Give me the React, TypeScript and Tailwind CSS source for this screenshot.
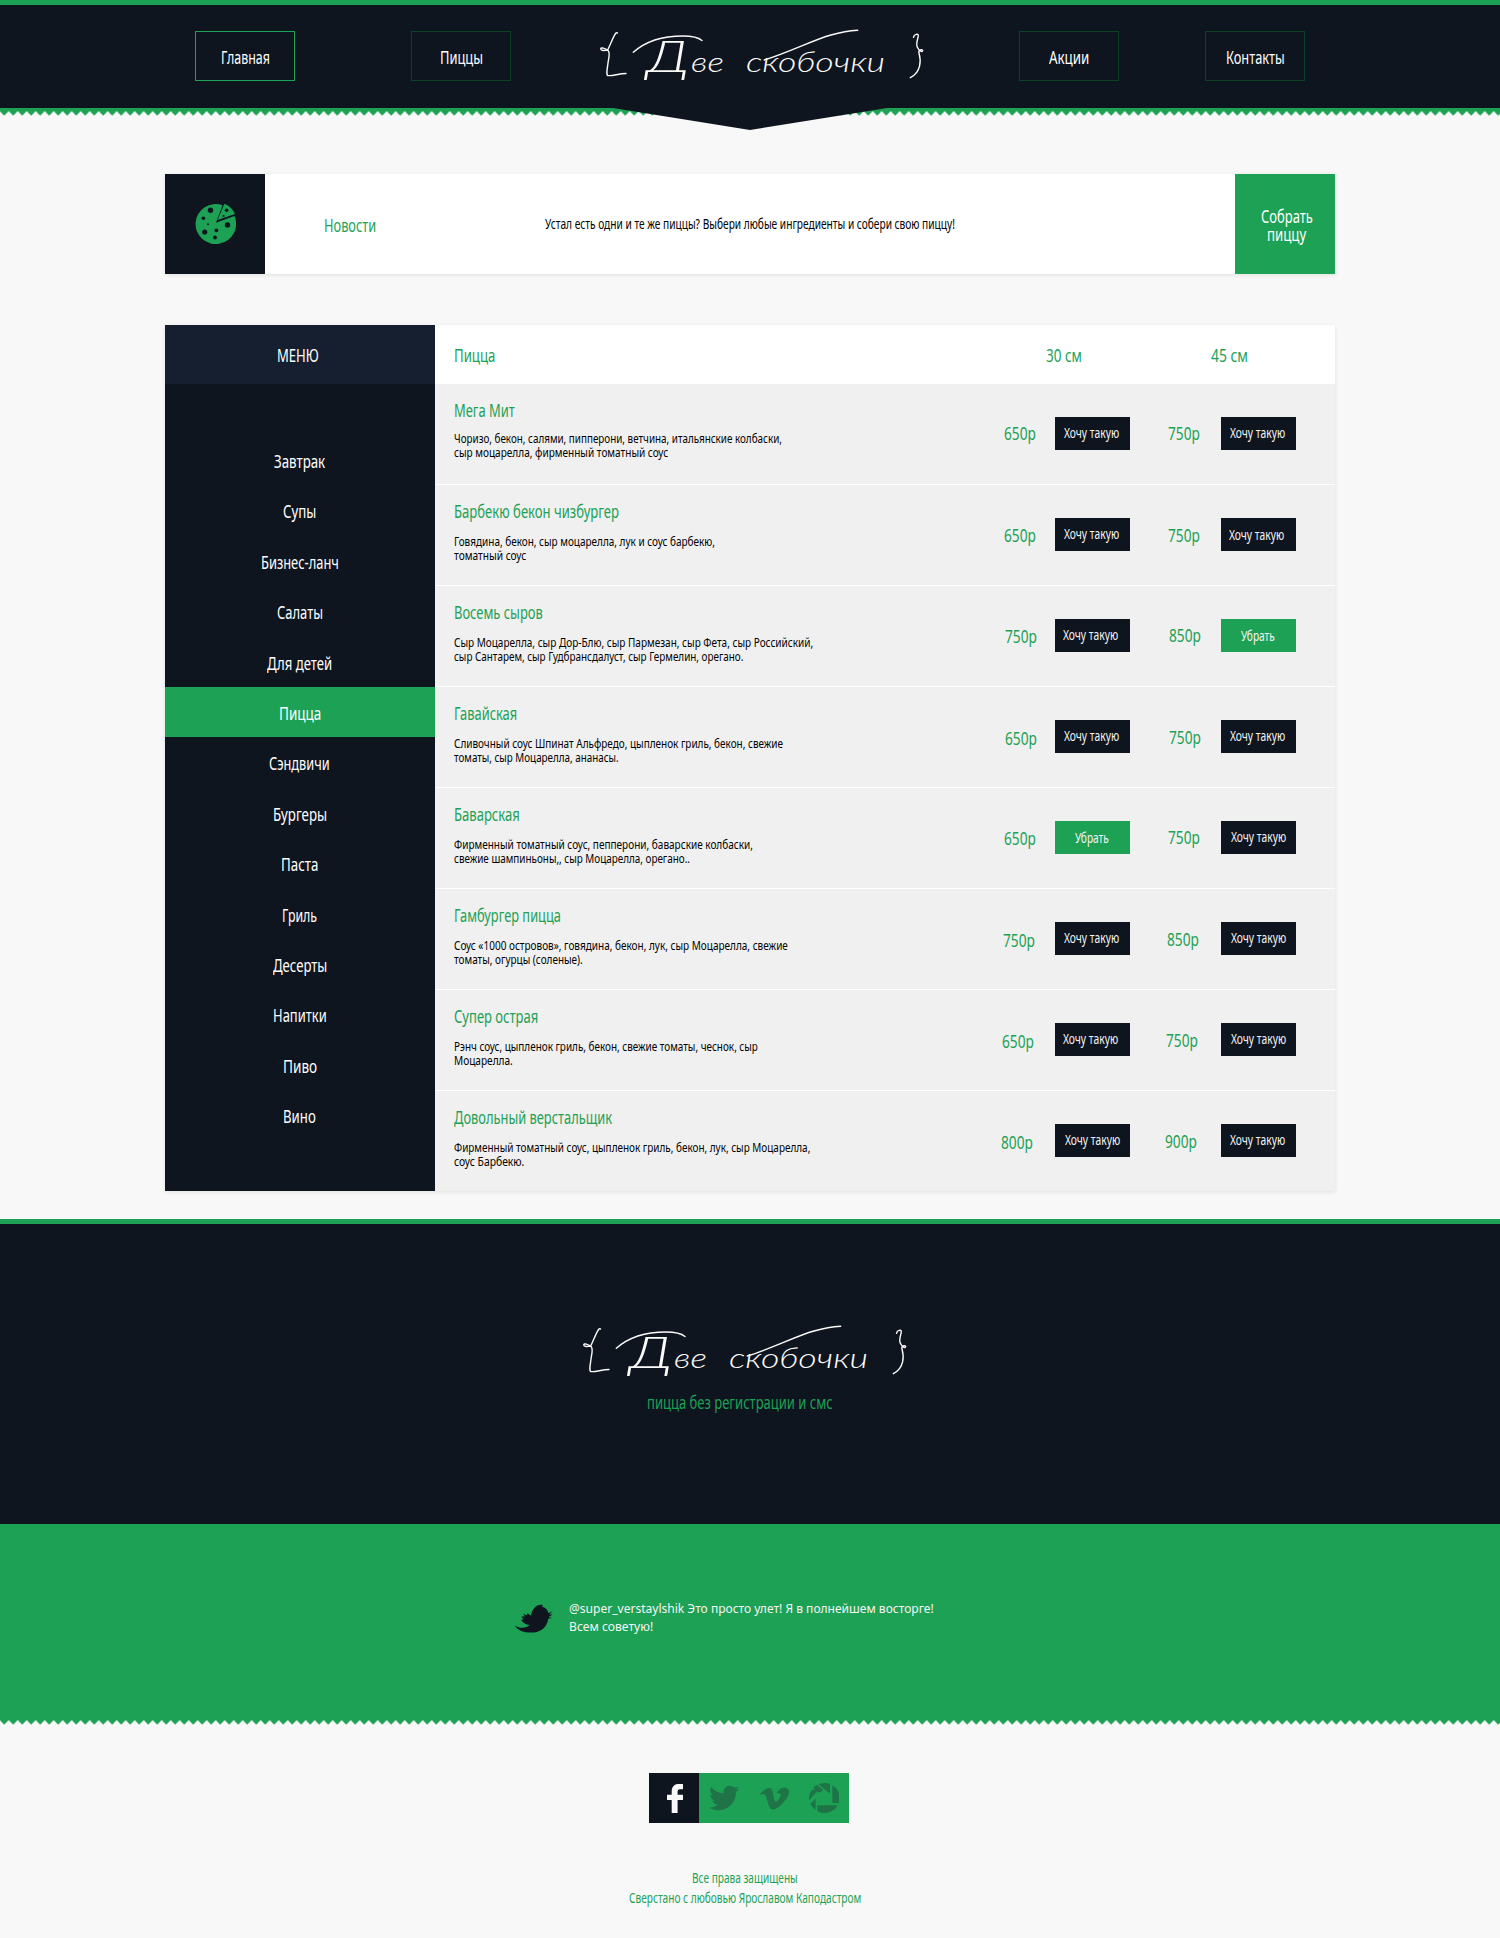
import { useLayoutEffect, useRef, type ReactNode } from "react";
import { FaTwitter, FaVimeoV } from "react-icons/fa";

/* Single line of text, condensed horizontally to an exact width. */
function Narrow({ w, children, className = "" }: { w: number; children: ReactNode; className?: string }) {
  const ref = useRef<HTMLSpanElement>(null);
  useLayoutEffect(() => {
    const el = ref.current;
    if (el) el.style.transform = `scaleX(${w / el.offsetWidth})`;
  }, [w]);
  return (
    <span className={`block whitespace-nowrap ${className}`} style={{ width: w }}>
      <span ref={ref} className="inline-block origin-left align-top">
        {children}
      </span>
    </span>
  );
}

function Logo() {
  return (
    <svg width="336" height="58" viewBox="0 0 336 58" fill="none" stroke="#fbfbf8" strokeWidth="1.4" strokeLinecap="round" strokeLinejoin="round">
      <path d="M22.500 8C20.500 5.500 17 16 12.700 25C10 25.500 6 26 5.700 24C6 22 10 23 13 25.500C15.500 28 13.800 32 13 38C12 45 11 50 13 50.500C17 51.300 24 48.500 31 48.500" />
      <path d="M38.300 27.300C52 15 72 11 88 11C98 11 104 13 107 15.500" />
      <path d="M169.300 35C195 27 218 15 236 10C247 7 255 5.800 262.700 5.300" />
      <path d="M318.500 12.300C319 9 323.500 8.500 323.300 10.500C323 15 320 19 322.800 23C325 27 327.500 27 327.700 25.500C327 23.500 323 25 324 28C326 35 326.500 47 315.300 52.700" />
      <g fill="#fbfbf8" stroke="none" className="font-['Lato','Liberation_Serif',serif] font-light italic">
        <text x="52" y="46.500" fontSize="43" textLength="42" lengthAdjust="spacingAndGlyphs">Д</text>
        <text x="96" y="46.500" fontSize="28" textLength="33" lengthAdjust="spacingAndGlyphs">ве</text>
        <text x="151" y="46.500" fontSize="27" textLength="139" lengthAdjust="spacingAndGlyphs">скобочки</text>
      </g>
    </svg>
  );
}

function PizzaIcon() {
  return (
    <svg width="42" height="42" viewBox="0 0 42 42">
      <path d="M28.500 2.200A20.300 20 0 1 0 40.400 13L22 19.800Z" fill="#1ca155" />
      <path d="M30.400 .8L23.600 17L41 11C39 6.500 35.500 2.800 30.400 .8Z" fill="#1ca155" />
      <g fill="#0f151f">
        <circle cx="16.500" cy="7.200" r="2.700" />
        <circle cx="9.400" cy="15.300" r="1.800" />
        <circle cx="14" cy="21.200" r="1" />
        <circle cx="10.700" cy="29" r="2.600" />
        <circle cx="22.400" cy="27.300" r="1.900" />
        <circle cx="33.500" cy="22" r="2.700" />
        <circle cx="21" cy="34.500" r="1.900" />
        <circle cx="32.600" cy="7.300" r="1.800" />
        <circle cx="29.500" cy="13" r="1.100" />
      </g>
    </svg>
  );
}

function Bird() {
  return (
    <svg width="38" height="30" viewBox="0 0 112 84" fill="#0f151f">
      <path d="M0 62C14 70 32 71 43 60C32 58 24 54 18 45L25 42L18 35L29 34L24 27L36 31L36 25L47 32C50 14 62 0 76 0C79 0 82 1 83 3L77 7C88 6 96 14 98 24L110 20L101 29L111 29L99 36L109 39L98 41C95 66 75 82 47 82C27 82 8 76 0 62Z" />
    </svg>
  );
}

function Aperture() {
  return (
    <svg width="30" height="30" viewBox="0 0 90 90" fill="currentColor">
      <path d="M29 4A45 45 0 0 1 63 3V32Z" />
      <path d="M70 7A45 45 0 0 1 90 60H70Z" />
      <path d="M25 67H86A45 45 0 0 1 25 85Z" />
      <path d="M20 47V81A45 45 0 0 1 4 63Z" />
      <path d="M0 52A45 45 0 0 1 8 21L31 19Z" />
      <path d="M12 15A45 45 0 0 1 24 6L43 21L31 29Z" />
    </svg>
  );
}

function Teeth({ id }: { id: string }) {
  return (
    <svg width="100%" height="5" className="block">
      <defs>
        <pattern id={id} width="9" height="5" patternUnits="userSpaceOnUse" x="-.3">
          <path d="M0 0H9L4.500 4.700Z" fill="#1ca155" />
        </pattern>
      </defs>
      <rect width="100%" height="5" fill={`url(#${id})`} />
    </svg>
  );
}

function NavItem({ label, w, active = false, className = "" }: { label: string; w: number; active?: boolean; className?: string }) {
  return (
    <a className={`flex h-[50px] w-[100px] items-center justify-center border pt-px text-lg leading-5 ${active ? "border-[#1ca155]" : "border-[#0c4126]"} ${className}`}>
      <Narrow w={w}>{label}</Narrow>
    </a>
  );
}

const menu: [string, number][] = [
  ["Завтрак", 51], ["Супы", 33], ["Бизнес-ланч", 78], ["Салаты", 46], ["Для детей", 65], ["Пицца", 42], ["Сэндвичи", 61],
  ["Бургеры", 54], ["Паста", 37], ["Гриль", 35], ["Десерты", 54], ["Напитки", 54], ["Пиво", 34], ["Вино", 33],
];

type Offer = { price: string; dx: number; y: number; tx: number; ty?: number; chosen?: boolean };
type Pizza = { name: string; nw: number; gap: number; lines: [string, number][]; a: Offer; b: Offer };

const pizzas: Pizza[] = [
  {
    name: "Мега Мит", nw: 61, gap: 11,
    lines: [["Чоризо, бекон, салями, пипперони, ветчина, итальянские колбаски,", 328], ["сыр моцарелла, фирменный томатный соус", 214]],
    a: { price: "650р", dx: 3, y: 50, tx: 9 }, b: { price: "750р", dx: 3, y: 50, tx: 9 },
  },
  {
    name: "Барбекю бекон чизбургер", nw: 165, gap: 13,
    lines: [["Говядина, бекон, сыр моцарелла, лук и соус барбекю,", 261], ["томатный соус", 72]],
    a: { price: "650р", dx: 3, y: 51, tx: 9 }, b: { price: "750р", dx: 3, y: 51, tx: 8, ty: 1 },
  },
  {
    name: "Восемь сыров", nw: 89, gap: 13,
    lines: [["Сыр Моцарелла, сыр Дор-Блю, сыр Пармезан, сыр Фета, сыр Российский,", 359], ["сыр Сантарем, сыр Гудбрансдалуст, сыр Гермелин, орегано.", 289]],
    a: { price: "750р", dx: 4, y: 51, tx: 8 }, b: { price: "850р", dx: 4, y: 50, tx: 20, ty: 1, chosen: true },
  },
  {
    name: "Гавайская", nw: 63, gap: 13,
    lines: [["Сливочный соус Шпинат Альфредо, цыпленок гриль, бекон, свежие", 329], ["томаты, сыр Моцарелла, ананасы.", 165]],
    a: { price: "650р", dx: 4, y: 52, tx: 9 }, b: { price: "750р", dx: 4, y: 51, tx: 9 },
  },
  {
    name: "Баварская", nw: 66, gap: 13,
    lines: [["Фирменный томатный соус, пепперони, баварские колбаски,", 299], ["свежие шампиньоны,, сыр Моцарелла, орегано..", 236]],
    a: { price: "650р", dx: 3, y: 51, tx: 20, ty: 1, chosen: true }, b: { price: "750р", dx: 3, y: 50, tx: 10 },
  },
  {
    name: "Гамбургер пицца", nw: 107, gap: 13,
    lines: [["Соус «1000 островов», говядина, бекон, лук, сыр Моцарелла, свежие", 334], ["томаты, огурцы (соленые).", 129]],
    a: { price: "750р", dx: 2, y: 52, tx: 9 }, b: { price: "850р", dx: 2, y: 51, tx: 10 },
  },
  {
    name: "Супер острая", nw: 84, gap: 13,
    lines: [["Рэнч соус, цыпленок гриль, бекон, свежие томаты, чеснок, сыр", 304], ["Моцарелла.", 59]],
    a: { price: "650р", dx: 1, y: 52, tx: 8 }, b: { price: "750р", dx: 1, y: 51, tx: 10 },
  },
  {
    name: "Довольный верстальщик", nw: 158, gap: 13,
    lines: [["Фирменный томатный соус, цыпленок гриль, бекон, лук, сыр Моцарелла,", 356], ["соус Барбекю.", 70]],
    a: { price: "800р", dx: 0, y: 52, tx: 10 }, b: { price: "900р", dx: 0, y: 51, tx: 9 },
  },
];

function OfferCell({ offer, className }: { offer: Offer; className: string }) {
  return (
    <div className={`flex ${className}`}>
      <div className="flex-1 text-lg leading-5 text-[#1ca155]" style={{ paddingLeft: offer.dx, paddingTop: offer.y - 11 }}>
        <Narrow w={32}>{offer.price}</Narrow>
      </div>
      <button
        className={`mt-[33px] h-[33px] w-[75px] text-left text-sm leading-[31px] text-[#f5f5f5] ${offer.chosen ? "bg-[#1ca155]" : "bg-[#0f151f]"}`}
        style={{ paddingLeft: offer.tx, paddingBottom: 2 - 2 * (offer.ty ?? 0) }}
      >
        <Narrow w={offer.chosen ? 34 : 55}>{offer.chosen ? "Убрать" : "Хочу такую"}</Narrow>
      </button>
    </div>
  );
}

export default function App() {
  return (
    <div className="h-[1938px] w-[1500px] overflow-hidden bg-[#f8f8f8] font-['Noto_Sans',sans-serif]">
      <header className="relative h-[116px]">
        <div className="flex h-[108px] border-t-5 border-[#1ca155] bg-[#0f151f] pt-[26px] text-white">
          <NavItem label="Главная" w={49} active className="ml-[195px]" />
          <NavItem label="Пиццы" w={43} className="ml-[116px]" />
          <div className="-mt-[6px] ml-[84px] w-[336px]">
            <Logo />
          </div>
          <NavItem label="Акции" w={40} className="ml-[88px]" />
          <NavItem label="Контакты" w={59} className="ml-[86px]" />
        </div>
        <div className="h-[3px] bg-[#1ca155]" />
        <Teeth id="teeth-top" />
        <svg className="absolute left-[613px] top-[107px]" width="274" height="23" viewBox="0 0 274 23">
          <path d="M0 0V1L137 23L274 1V0Z" fill="#0f151f" />
        </svg>
      </header>

      <section className="mx-auto mt-[58px] flex h-[100px] w-[1170px] bg-white shadow-[0_1px_4px_rgba(0,0,0,0.1)]">
        <div className="flex w-[100px] items-center justify-center bg-[#0f151f]">
          <PizzaIcon />
        </div>
        <div className="w-[280px] pl-[59px] pt-[41px] text-lg leading-5 text-[#1ca155]">
          <Narrow w={52}>Новости</Narrow>
        </div>
        <div className="flex-1 pt-[40px] text-sm leading-5 text-black">
          <Narrow w={410}>Устал есть одни и те же пиццы? Выбери любые ингредиенты и собери свою пиццу!</Narrow>
        </div>
        <div className="flex w-[100px] flex-col items-center bg-[#1ca155] pt-[33px] pl-[3px] text-lg leading-[18px] text-white">
          <Narrow w={52}>Собрать</Narrow>
          <Narrow w={39}>пиццу</Narrow>
        </div>
      </section>

      <section className="mx-auto mt-[51px] flex h-[866px] w-[1170px] bg-[#f0f0f0] shadow-[0_1px_4px_rgba(0,0,0,0.1)]">
        <aside className="w-[270px] bg-[#0f151f] text-lg leading-5 text-white">
          <h2 className="flex h-[59px] items-center justify-center bg-[#161f2f] pt-px pr-1">
            <Narrow w={42}>МЕНЮ</Narrow>
          </h2>
          <nav className="flex flex-col gap-[0.4px] pt-[51px]">
            {menu.map(([label, w]) => (
              <a key={label} className={`flex h-[50px] shrink-0 items-center justify-center pt-[2px] pr-px ${label === "Пицца" ? "bg-[#1ca155]" : ""}`}>
                <Narrow w={w}>{label}</Narrow>
              </a>
            ))}
          </nav>
        </aside>
        <div className="flex-1">
          <div className="flex h-[59px] bg-white pl-[19px] pt-[20px] text-lg leading-5 text-[#1ca155]">
            <Narrow w={41}>Пицца</Narrow>
            <Narrow w={36} className="ml-[551px]">30 см</Narrow>
            <Narrow w={37} className="ml-[129px]">45 см</Narrow>
          </div>
          {pizzas.map((p) => (
            <div key={p.name} className="flex h-[101px] border-b border-white last:h-[100px] last:border-0">
              <div className="w-[566px] pl-[19px] pt-[16px] text-[13px] leading-[14px] text-black">
                <h3 className="text-lg leading-5 text-[#1ca155]" style={{ marginBottom: p.gap }}>
                  <Narrow w={p.nw}>{p.name}</Narrow>
                </h3>
                {p.lines.map(([text, w]) => (
                  <Narrow key={text} w={w}>{text}</Narrow>
                ))}
              </div>
              <OfferCell offer={p.a} className="w-[129px]" />
              <OfferCell offer={p.b} className="ml-[35px] w-[131px]" />
            </div>
          ))}
        </div>
      </section>

      <section className="mt-[28px] h-[305px] border-t-5 border-[#1ca155] bg-[#0f151f] pt-[97px]">
        <div className="ml-[578px] h-[71px]">
          <Logo />
        </div>
        <div className="ml-[647px] text-lg leading-5 text-[#1ca155]">
          <Narrow w={186}>пицца без регистрации и смс</Narrow>
        </div>
      </section>
      <section className="flex h-[196px] bg-[#1ca155] pl-[515px] pt-[76px]">
        <div className="mt-1">
          <Bird />
        </div>
        <div className="ml-4 text-xs leading-[18px] text-[#f5f5f5]">
          <Narrow w={365}>@super_verstaylshik Это просто улет! Я в полнейшем восторге!</Narrow>
          <Narrow w={84}>Всем советую!</Narrow>
        </div>
      </section>
      <Teeth id="teeth-bottom" />

      <footer className="pt-[48px]">
        <div className="ml-[649px] flex h-[50px] w-[200px] bg-[#1ca155] text-[#1f7447]">
          <div className="flex w-[50px] items-center justify-center bg-[#0f151f]">
            <svg width="16" height="29" viewBox="0 0 16 29" className="ml-px">
              <path d="M4.700 29V16H0V10.700H4.700V7.500C4.700 2.500 7.500 0 11.500 0H16V5.300H13C11.300 5.300 10.600 6 10.600 7.800V10.700H16V16H10.600V29Z" fill="#f8f8f8" />
            </svg>
          </div>
          <div className="flex flex-1 pl-[10px]">
            <FaTwitter size={30} className="mt-[10px]" />
            <FaVimeoV size={29} preserveAspectRatio="none" className="ml-[21px] mt-[11px]" />
            <div className="ml-[20px] mt-[10px]">
              <Aperture />
            </div>
          </div>
        </div>
        <div className="mt-[45px] text-sm leading-5 text-[#1ca155]">
          <Narrow w={106} className="ml-[692px]">Все права защищены</Narrow>
          <Narrow w={232} className="ml-[629px]">Сверстано с любовью Ярославом Каподастром</Narrow>
        </div>
      </footer>
    </div>
  );
}
